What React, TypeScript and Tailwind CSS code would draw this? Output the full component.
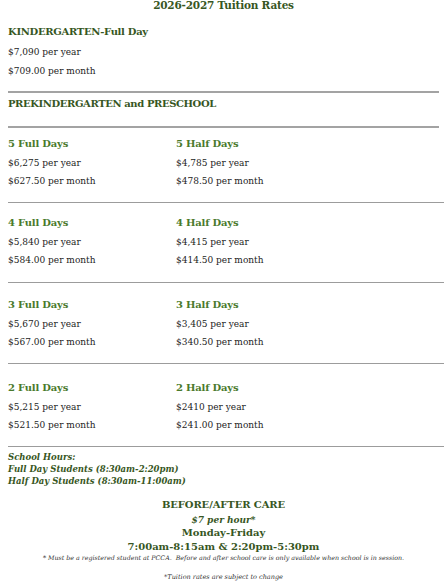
import React from "react"

const rows = [
  { full: "5", half: "5", fy: "$6,275", fm: "$627.50", hy: "$4,785", hm: "$478.50", mt: "mt-[9px]", after: "mt-[14px]" },
  { full: "4", half: "4", fy: "$5,840", fm: "$584.00", hy: "$4,415", hm: "$414.50", mt: "mt-[13px]", after: "mt-[15px]" },
  { full: "3", half: "3", fy: "$5,670", fm: "$567.00", hy: "$3,405", hm: "$340.50", mt: "mt-[15px]", after: "mt-[14px]" },
  { full: "2", half: "2", fy: "$5,215", fm: "$521.50", hy: "$2410", hm: "$241.00", mt: "mt-[17px]", after: "mt-[14px]" },
]

function Price({ amount, unit }: { amount: string; unit: string }) {
  return (
    <div className="h-[14px] leading-[14px] text-[9px] text-[#1c1c1c]">
      {amount} per {unit}
    </div>
  )
}

export default function App() {
  return (
    <div
      className="w-[447px] h-[587px] overflow-hidden bg-white px-[8px]"
      style={{ fontFamily: '"DejaVu Serif", serif' }}
    >
      {/* Title */}
      <div className="-mt-[2px] h-[14px] leading-[14px] text-center text-[10.5px] font-bold tracking-[-0.2px] text-[#375623]">
        2026-2027 Tuition Rates
      </div>

      {/* Kindergarten */}
      <div className="mt-[13px] h-[14px] leading-[14px] text-[10px] font-bold tracking-[-0.3px] text-[#375623]">
        KINDERGARTEN-Full Day
      </div>
      <div className="mt-[6px]">
        <Price amount="$7,090" unit="year" />
      </div>
      <div className="mt-[5px]">
        <Price amount="$709.00" unit="month" />
      </div>

      <div className="mt-[13px] h-[2px] w-[431px] bg-[#a3a3a3]"></div>
      <div className="mt-[4px] h-[14px] leading-[14px] text-[10px] font-bold tracking-[-0.4px] text-[#375623]">
        PREKINDERGARTEN and PRESCHOOL
      </div>
      <div className="mt-[15px] h-[2px] w-[431px] bg-[#a3a3a3]"></div>

      {/* Day options */}
      {rows.map((r) => (
        <div key={r.full}>
          <div className={`${r.mt} grid grid-cols-[168px_1fr]`}>
            <div>
              <div className="h-[14px] leading-[14px] text-[10px] font-bold tracking-[-0.2px] text-[#4a7a2c]">{r.full} Full Days</div>
              <div className="mt-[5px]">
                <Price amount={r.fy} unit="year" />
              </div>
              <div className="mt-[4px]">
                <Price amount={r.fm} unit="month" />
              </div>
            </div>
            <div>
              <div className="h-[14px] leading-[14px] text-[10px] font-bold tracking-[-0.2px] text-[#4a7a2c]">{r.half} Half Days</div>
              <div className="mt-[5px]">
                <Price amount={r.hy} unit="year" />
              </div>
              <div className="mt-[4px]">
                <Price amount={r.hm} unit="month" />
              </div>
            </div>
          </div>
          <div className={`${r.after} h-px w-[436px] bg-[#9c9c9c]`}></div>
        </div>
      ))}

      {/* School hours */}
      <div className="mt-[4px] text-[8.5px] font-bold italic text-[#375623]">
        <div className="h-[12px] leading-[12px]">School Hours:</div>
        <div className="h-[12px] leading-[12px]">Full Day Students (8:30am-2:20pm)</div>
        <div className="h-[12px] leading-[12px]">Half Day Students (8:30am-11:00am)</div>
      </div>

      {/* Before / after care */}
      <div className="mt-[11px] text-center text-[#375623] font-bold">
        <div className="h-[14px] leading-[14px] text-[10px] tracking-[-0.1px]">BEFORE/AFTER CARE</div>
        <div className="mt-[2px] h-[12px] leading-[12px] text-[9px] italic">$7 per hour*</div>
        <div className="h-[14px] leading-[14px] text-[10px]">Monday-Friday</div>
        <div className="h-[14px] leading-[14px] text-[10px]">7:00am-8:15am &amp; 2:20pm-5:30pm</div>
      </div>
      <div className="h-[8px] leading-[8px] text-center text-[6.3px] italic text-[#333333]">
        * Must be a registered student at PCCA.&nbsp; Before and after school care is only available when school is in session.
      </div>
      <div className="mt-[11px] h-[8px] leading-[8px] text-center text-[6.5px] italic text-[#333333]">
        *Tuition rates are subject to change
      </div>
    </div>
  )
}
